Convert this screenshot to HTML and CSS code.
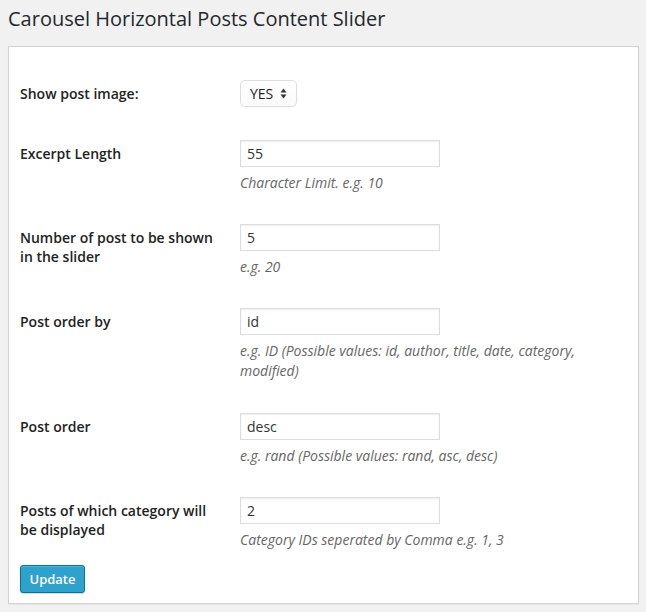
FILE: index.html
```html
<!DOCTYPE html>
<html lang="en">
<head>
<meta charset="utf-8">
<title>Carousel Horizontal Posts Content Slider</title>
<link rel="stylesheet" href="styles.css">
</head>
<body>
<h2 class="title">Carousel Horizontal Posts Content Slider</h2>
<div class="panel">
  <form class="settings">
    <div class="row row-select">
      <label class="label">Show post image:</label>
      <div class="field">
        <div class="select">
          <span class="select-value">YES</span>
          <svg class="select-arrows" width="7" height="11" viewBox="0 0 7 11"><path d="M3.5 0.5 L6.5 4.5 L0.5 4.5 Z M3.5 10.5 L6.5 6.5 L0.5 6.5 Z" fill="#333"/></svg>
        </div>
      </div>
    </div>
    <div class="row">
      <label class="label">Excerpt Length</label>
      <div class="field">
        <div class="input">55</div>
        <p class="desc">Character Limit. e.g. 10</p>
      </div>
    </div>
    <div class="row">
      <label class="label">Number of post to be shown in the slider</label>
      <div class="field">
        <div class="input">5</div>
        <p class="desc">e.g. 20</p>
      </div>
    </div>
    <div class="row">
      <label class="label">Post order by</label>
      <div class="field">
        <div class="input">id</div>
        <p class="desc desc-wrap">e.g. ID (Possible values: id, author, title, date, category, modified)</p>
      </div>
    </div>
    <div class="row">
      <label class="label">Post order</label>
      <div class="field">
        <div class="input">desc</div>
        <p class="desc">e.g. rand (Possible values: rand, asc, desc)</p>
      </div>
    </div>
    <div class="row">
      <label class="label">Posts of which category will be displayed</label>
      <div class="field">
        <div class="input">2</div>
        <p class="desc">Category IDs seperated by Comma e.g. 1, 3</p>
      </div>
    </div>
    <div class="actions">
      <button type="button" class="btn">Update</button>
    </div>
  </form>
</div>
</body>
</html>
```
FILE: styles.css
```css
html, body {
  margin: 0;
  padding: 0;
  background: #f1f1f1;
}
body {
  padding: 0 7px 8px 8px;
  font-family: "Open Sans", "Liberation Sans", sans-serif;
  color: #333;
}
.title {
  margin: 0;
  padding-top: 4px;
  height: 30px;
  line-height: 30px;
  font-size: 20px;
  font-weight: 400;
  color: #23282d;
  margin-bottom: 12px;
}
.panel {
  background: #fff;
  border: 1px solid #d2d2d2;
  box-shadow: 0 1px 1px rgba(0,0,0,0.04);
  padding: 33px 11px 10px 11px;
}
.settings {
  display: flex;
  flex-direction: column;
  gap: 31px;
}
.row {
  display: grid;
  grid-template-columns: 220px 1fr;
  align-items: start;
}
.row-select {
  margin-bottom: 2px;
}
.label {
  font-size: 14px;
  font-weight: 600;
  line-height: 19px;
  color: #222;
  padding-top: 4px;
  padding-right: 20px;
}
.field {
  padding-right: 10px;
}
.input {
  box-sizing: border-box;
  width: 200px;
  height: 27px;
  border: 1px solid #ddd;
  box-shadow: inset 0 1px 2px rgba(0,0,0,0.07);
  padding: 0 6px;
  font-size: 14px;
  line-height: 25px;
  color: #333;
}
.select {
  box-sizing: border-box;
  width: 57px;
  height: 27px;
  border: 1px solid #ddd;
  border-radius: 5px;
  background: linear-gradient(#fff, #fafafa);
  display: flex;
  align-items: center;
  justify-content: space-between;
  padding: 0 9px 0 9px;
  font-size: 14px;
  color: #222;
}
.select-value {
  line-height: 25px;
}
.select-arrows {
  display: block;
}
.desc {
  margin: 6px 0 0;
  font-size: 14px;
  line-height: 20px;
  font-style: italic;
  color: #666;
}
.desc-wrap {
  margin-bottom: 1px;
}
.actions {
  margin-top: -16px;
}
.btn {
  display: block;
  box-sizing: border-box;
  width: 65px;
  height: 28px;
  border: 1px solid #0074a2;
  border-radius: 3px;
  background: #2ea2cc;
  box-shadow: inset 0 1px 0 rgba(120,200,230,0.5), 0 1px 0 rgba(0,0,0,0.15);
  color: #fff;
  font-family: "Open Sans", "Liberation Sans", sans-serif;
  font-size: 13px;
  font-weight: 600;
  padding: 0;
  line-height: 26px;
}
```
